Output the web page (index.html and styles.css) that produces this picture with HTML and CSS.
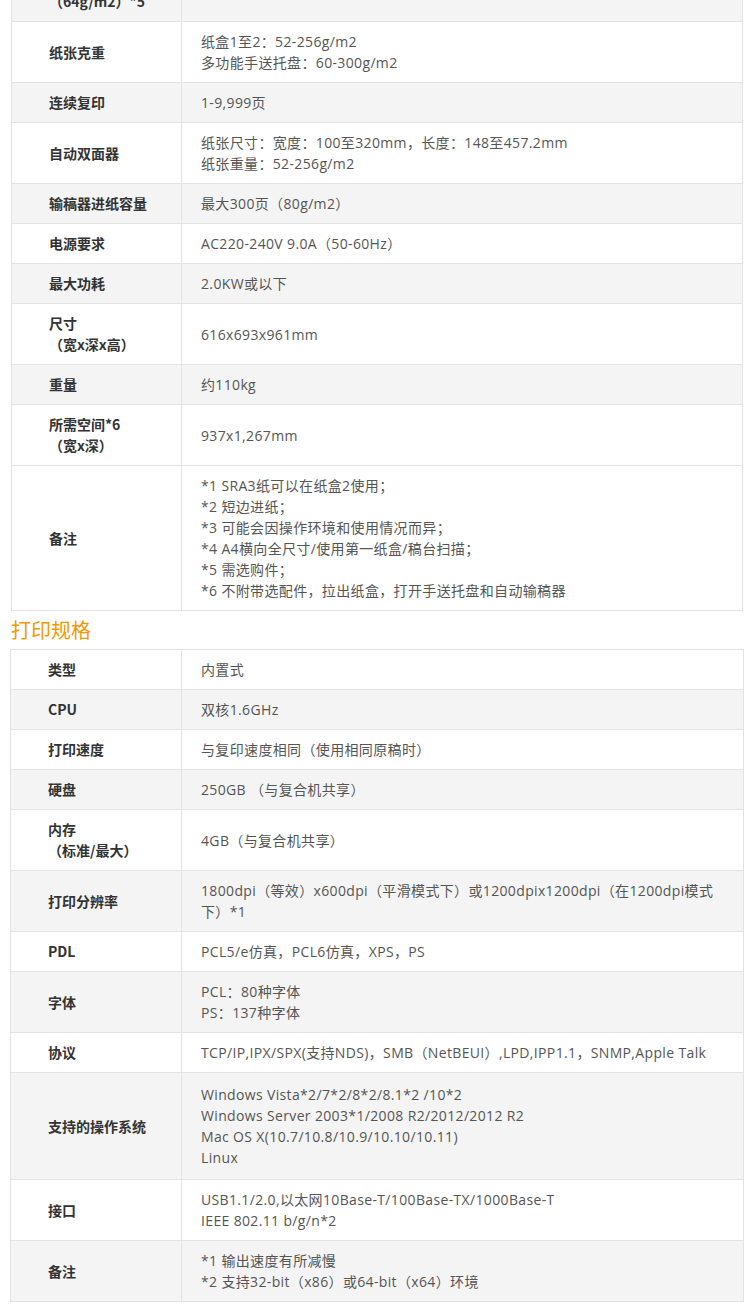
FILE: index.html
```html
<!DOCTYPE html>
<html lang="zh-CN">
<head>
<meta charset="utf-8">
<title>规格</title>
<link rel="stylesheet" href="styles.css">
</head>
<body>
<div class="page">
  <table class="spec spec-first">
    <tr class="gray"><th>首张复印时间<br>（64g/m2）*5</th><td>约3.9秒</td></tr>
    <tr><th>纸张克重</th><td>纸盒1至2：52-256g/m2<br>多功能手送托盘：60-300g/m2</td></tr>
    <tr class="gray"><th>连续复印</th><td>1-9,999页</td></tr>
    <tr><th>自动双面器</th><td>纸张尺寸：宽度：100至320mm，长度：148至457.2mm<br>纸张重量：52-256g/m2</td></tr>
    <tr class="gray"><th>输稿器进纸容量</th><td>最大300页（80g/m2）</td></tr>
    <tr><th>电源要求</th><td>AC220-240V 9.0A（50-60Hz）</td></tr>
    <tr class="gray"><th>最大功耗</th><td>2.0KW或以下</td></tr>
    <tr><th>尺寸<br>（宽x深x高）</th><td>616x693x961mm</td></tr>
    <tr class="gray"><th>重量</th><td>约110kg</td></tr>
    <tr><th>所需空间*6<br>（宽x深）</th><td>937x1,267mm</td></tr>
    <tr><th>备注</th><td>*1 SRA3纸可以在纸盒2使用；<br>*2 短边进纸；<br>*3 可能会因操作环境和使用情况而异；<br>*4 A4横向全尺寸/使用第一纸盒/稿台扫描；<br>*5 需选购件；<br>*6 不附带选配件，拉出纸盒，打开手送托盘和自动输稿器</td></tr>
  </table>

  <h2 class="section-title">打印规格</h2>

  <table class="spec spec-second">
    <tr><th>类型</th><td>内置式</td></tr>
    <tr class="gray"><th>CPU</th><td>双核1.6GHz</td></tr>
    <tr><th>打印速度</th><td>与复印速度相同（使用相同原稿时）</td></tr>
    <tr class="gray"><th>硬盘</th><td>250GB （与复合机共享）</td></tr>
    <tr><th>内存<br>（标准/最大）</th><td>4GB（与复合机共享）</td></tr>
    <tr class="gray"><th>打印分辨率</th><td>1800dpi（等效）x600dpi（平滑模式下）或1200dpix1200dpi（在1200dpi模式下）*1</td></tr>
    <tr><th>PDL</th><td>PCL5/e仿真，PCL6仿真，XPS，PS</td></tr>
    <tr class="gray"><th>字体</th><td>PCL：80种字体<br>PS：137种字体</td></tr>
    <tr><th>协议</th><td>TCP/IP,IPX/SPX(支持NDS)，SMB（NetBEUI）,LPD,IPP1.1，SNMP,Apple Talk</td></tr>
    <tr class="gray"><th>支持的操作系统</th><td class="tall">Windows Vista*2/7*2/8*2/8.1*2 /10*2<br>Windows Server 2003*1/2008 R2/2012/2012 R2<br>Mac OS X(10.7/10.8/10.9/10.10/10.11)<br>Linux</td></tr>
    <tr><th>接口</th><td>USB1.1/2.0,以太网10Base-T/100Base-TX/1000Base-T<br>IEEE 802.11 b/g/n*2</td></tr>
    <tr class="gray"><th>备注</th><td>*1 输出速度有所减慢<br>*2 支持32-bit（x86）或64-bit（x64）环境</td></tr>
  </table>
</div>
</body>
</html>
```

FILE: styles.css
```css
html, body {
  margin: 0;
  padding: 0;
  background: #ffffff;
}

body {
  font-family: "Open Sans", "Noto Sans CJK SC", sans-serif;
  font-size: 14px;
  color: #555555;
}

.page {
  padding: 0 8px 0 11px;
  margin-top: -40px;
}

.spec {
  width: 732px;
  border-collapse: collapse;
  table-layout: fixed;
}

.spec-second {
  width: 734px;
  margin-left: -1px;
}

.spec th,
.spec td {
  border: 1px solid #e3e3e3;
  line-height: 21px;
  padding: 9px 10px 9px 19px;
  vertical-align: middle;
  text-align: left;
}

.spec td {
  letter-spacing: 0.35px;
}

.spec th {
  width: 122px;
  padding-left: 37px;
  font-weight: bold;
  color: #333333;
  font-family: "Noto Sans CJK SC", sans-serif;
  font-size: 14px;
}

.spec-second th {
  width: 123px;
}

.spec td.tall {
  padding-top: 11px;
  padding-bottom: 11px;
}

.spec tr.gray th,
.spec tr.gray td {
  background: #f4f4f4;
}

.section-title {
  margin: 0;
  height: 38px;
  line-height: 38px;
  font-size: 20px;
  font-weight: normal;
  color: #f39800;
  font-family: "Noto Sans CJK SC", sans-serif;
}
```
